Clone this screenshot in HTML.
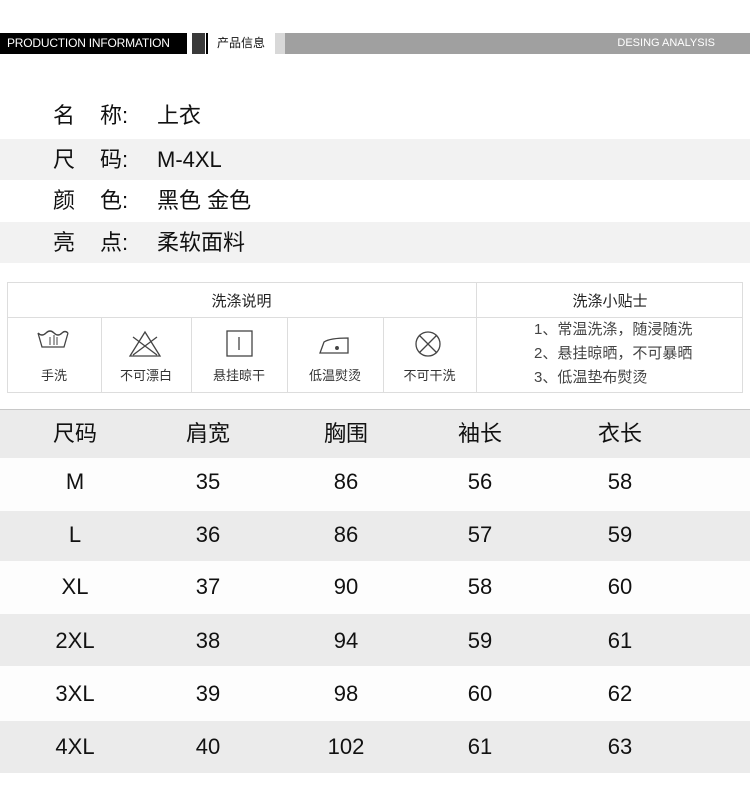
<!DOCTYPE html>
<html><head><meta charset="utf-8"><style>
*{margin:0;padding:0;box-sizing:border-box}
body{width:750px;height:801px;background:#fff;font-family:"Liberation Sans","Noto Sans CJK SC",sans-serif;color:#111;position:relative;overflow:hidden}
.a{position:absolute}
.attr{position:absolute;left:0;width:750px;height:41px;font-size:22px;line-height:41px}
.attr span{position:absolute}
.g{background:#f2f2f2}
.cell{position:absolute;text-align:center;font-size:13px;color:#333}
.row{position:absolute;left:0;width:750px;font-size:22px}
.row span{position:absolute;width:120px;margin-left:-60px;text-align:center}
</style></head><body>
<div class="a" style="left:0;top:33px;width:187px;height:21px;background:#000;color:#fff;font-size:12px;line-height:21px;padding-left:7px;letter-spacing:-0.2px">PRODUCTION INFORMATION</div>
<div class="a" style="left:192px;top:33px;width:13px;height:21px;background:#3a3a3a"></div>
<div class="a" style="left:206px;top:33px;width:2px;height:21px;background:#000"></div>
<div class="a" style="left:217px;top:33px;font-size:12px;line-height:21px;color:#111">产品信息</div>
<div class="a" style="left:275px;top:33px;width:10px;height:21px;background:#d8d8d8"></div>
<div class="a" style="left:285px;top:33px;width:465px;height:21px;background:#a0a0a0;color:#fff;font-size:11px;line-height:21px;text-align:right;padding-right:35px">DESING ANALYSIS</div>

<div class="attr" style="top:95px"><span style="left:53px">名</span><span style="left:100px">称:</span><span style="left:157px">上衣</span></div>
<div class="attr g" style="top:139px"><span style="left:53px">尺</span><span style="left:100px">码:</span><span style="left:157px">M-4XL</span></div>
<div class="attr" style="top:180px"><span style="left:53px">颜</span><span style="left:100px">色:</span><span style="left:157px">黑色 金色</span></div>
<div class="attr g" style="top:222px"><span style="left:53px">亮</span><span style="left:100px">点:</span><span style="left:157px">柔软面料</span></div>

<div class="a" style="left:7px;top:282px;width:736px;height:111px;border:1px solid #ddd"></div>
<div class="a" style="left:7px;top:317px;width:736px;height:1px;background:#ddd"></div>
<div class="a" style="left:476px;top:282px;width:1px;height:111px;background:#ddd"></div>
<div class="a" style="left:101px;top:317px;width:1px;height:76px;background:#ddd"></div>
<div class="a" style="left:191px;top:317px;width:1px;height:76px;background:#ddd"></div>
<div class="a" style="left:287px;top:317px;width:1px;height:76px;background:#ddd"></div>
<div class="a" style="left:383px;top:317px;width:1px;height:76px;background:#ddd"></div>
<div class="cell" style="left:7px;top:290px;width:469px;font-size:15px;color:#222">洗涤说明</div>
<div class="cell" style="left:477px;top:290px;width:266px;font-size:15px;color:#222">洗涤小贴士</div>

<svg class="a" style="left:0;top:325px" width="480" height="36" fill="none" stroke="#444" stroke-width="1.3">
<path d="M38 8 L42 22 H64 L68 8 M38 8 q4 4 8 0 q4 -4 8 0 q4 4 8 0 q3 -3 6 0"/>
<path d="M50 12 v8 M54 10 v10 M57 12 v8" stroke-width="1"/>
<path d="M130 31 L145 7 L160 31 Z M133 12 L157 30 M157 12 L133 30"/>
<rect x="227" y="6" width="25" height="25"/><path d="M239 12 v13"/>
<path d="M320 28 L324 17 Q330 13 348 13 V28 Z"/><circle cx="337" cy="23" r="1.3" fill="#444"/>
<circle cx="428" cy="19" r="12"/><path d="M419 10 L437 28 M437 10 L419 28"/>
</svg>
<div class="cell" style="left:7px;top:365px;width:94px">手洗</div>
<div class="cell" style="left:101px;top:365px;width:90px">不可漂白</div>
<div class="cell" style="left:191px;top:365px;width:96px">悬挂晾干</div>
<div class="cell" style="left:287px;top:365px;width:96px">低温熨烫</div>
<div class="cell" style="left:383px;top:365px;width:93px">不可干洗</div>
<div class="a" style="left:534px;top:318px;font-size:15px;line-height:24px;color:#444">1、常温洗涤，随浸随洗<br>2、悬挂晾晒，不可暴晒<br>3、低温垫布熨烫</div>

<div class="a" style="left:0;top:409px;width:750px;height:1px;background:#c8c8c8"></div>
<div class="row" style="top:410px;height:48px;line-height:48px;background:#ebebeb"><span style="left:75px">尺码</span><span style="left:208px">肩宽</span><span style="left:346px">胸围</span><span style="left:480px">袖长</span><span style="left:620px">衣长</span></div>
<div class="row" style="top:458px;height:53px;line-height:48px;background:#fdfdfd"><span style="left:75px">M</span><span style="left:208px">35</span><span style="left:346px">86</span><span style="left:480px">56</span><span style="left:620px">58</span></div>
<div class="row" style="top:511px;height:50px;line-height:48px;background:#ebebeb"><span style="left:75px">L</span><span style="left:208px">36</span><span style="left:346px">86</span><span style="left:480px">57</span><span style="left:620px">59</span></div>
<div class="row" style="top:561px;height:53px;line-height:52px;background:#fdfdfd"><span style="left:75px">XL</span><span style="left:208px">37</span><span style="left:346px">90</span><span style="left:480px">58</span><span style="left:620px">60</span></div>
<div class="row" style="top:614px;height:52px;line-height:54px;background:#ebebeb"><span style="left:75px">2XL</span><span style="left:208px">38</span><span style="left:346px">94</span><span style="left:480px">59</span><span style="left:620px">61</span></div>
<div class="row" style="top:666px;height:55px;line-height:56px;background:#fdfdfd"><span style="left:75px">3XL</span><span style="left:208px">39</span><span style="left:346px">98</span><span style="left:480px">60</span><span style="left:620px">62</span></div>
<div class="row" style="top:721px;height:52px;line-height:52px;background:#ebebeb"><span style="left:75px">4XL</span><span style="left:208px">40</span><span style="left:346px">102</span><span style="left:480px">61</span><span style="left:620px">63</span></div>
</body></html>
